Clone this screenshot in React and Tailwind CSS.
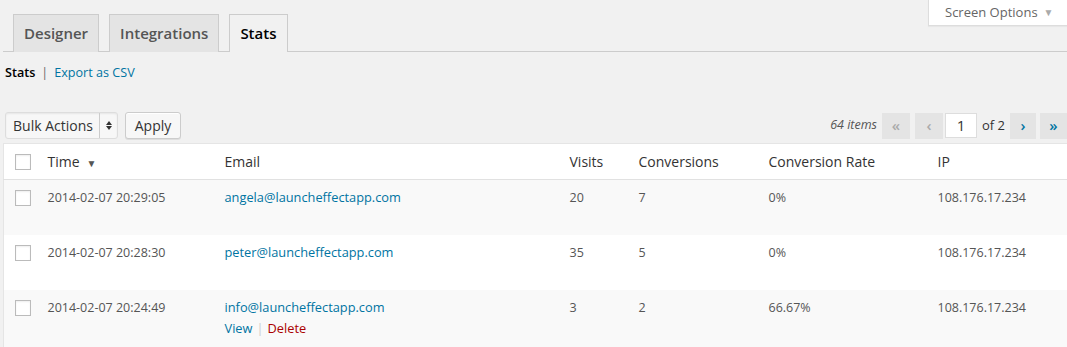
import React from "react";

const rows = [
  { time: "2014-02-07 20:29:05", email: "angela@launcheffectapp.com", visits: "20", conv: "7", rate: "0%", ip: "108.176.17.234", bg: "bg-[#f9f9f9]" },
  { time: "2014-02-07 20:28:30", email: "peter@launcheffectapp.com", visits: "35", conv: "5", rate: "0%", ip: "108.176.17.234", bg: "bg-white" },
  { time: "2014-02-07 20:24:49", email: "info@launcheffectapp.com", visits: "3", conv: "2", rate: "66.67%", ip: "108.176.17.234", bg: "bg-[#f9f9f9]", actions: true },
];

function Box() {
  return <div className="w-4 h-4 border border-[#bbb] bg-white shadow-[inset_0_1px_2px_rgba(0,0,0,0.07)]" />;
}

export default function App() {
  return (
    <div className="w-[1067px] h-[347px] overflow-hidden bg-[#f1f1f1] relative text-[13px] text-[#444]" style={{ fontFamily: '"Open Sans", sans-serif' }}>
      {/* Screen options */}
      <div className="absolute right-0 top-0 w-[139px] h-[26px] bg-white border-l border-b border-[#ddd] flex items-center pl-[16px] text-[#666] text-[13px] shadow-[0_1px_1px_rgba(0,0,0,0.04)]">
        <span>Screen Options</span>
        <span className="ml-[6px] text-[#aaa] text-[10px]">▼</span>
      </div>

      <div className="pl-[3px]">
        {/* Tabs */}
        <div className="pt-[14px] pl-[10px] flex gap-[10px] border-b border-[#ccc] h-[52px]">
          <div className="h-[38px] px-[10px] flex items-center bg-[#e4e4e4] border border-[#ccc] border-b-0 text-[15px] font-semibold text-[#555]">Designer</div>
          <div className="h-[38px] px-[10px] flex items-center bg-[#e4e4e4] border border-[#ccc] border-b-0 text-[15px] font-semibold text-[#555]">Integrations</div>
          <div className="h-[38px] px-[10px] flex items-center bg-[#f1f1f1] border border-[#ccc] border-b-0 text-[15px] font-semibold text-black -mb-px">Stats</div>
        </div>

        {/* Subnav */}
        <div className="mt-[12px] h-[18px] flex items-center pl-[2px] text-[12.6px]">
          <span className="font-semibold text-black">Stats</span>
          <span className="mx-[6px] text-[#666]">|</span>
          <span className="text-[#0074a2]">Export as CSV</span>
        </div>

        {/* Actions */}
        <div className="mt-[30px] flex items-center h-[27px]">
          <div className="ml-[2px] w-[113px] h-[27px] bg-[#f7f7f7] border border-[#ddd] rounded-[3px] shadow-[inset_0_1px_2px_rgba(0,0,0,0.07)] flex items-center">
            <span className="pl-[7px] text-[14px] text-[#333] flex-1">Bulk Actions</span>
            <div className="w-[18px] h-full border-l border-[#ccc] flex flex-col items-center justify-center gap-[1px]">
              <svg width="6" height="4" viewBox="0 0 6 4"><path d="M0 4 L3 0 L6 4 Z" fill="#333" /></svg>
              <svg width="6" height="4" viewBox="0 0 6 4"><path d="M0 0 L3 4 L6 0 Z" fill="#333" /></svg>
            </div>
          </div>
          <div className="ml-[7px] w-[56px] h-[27px] bg-[#f7f7f7] border border-[#ccc] rounded-[3px] flex items-center justify-center text-[14px] text-[#333] shadow-[0_1px_0_#fff_inset,0_1px_0_rgba(0,0,0,0.08)]">Apply</div>

          <div className="ml-auto flex items-center h-[27px]">
            <span className="italic text-[#555] text-[12.5px] mr-[5px]">64 items</span>
            <div className="w-[28px] h-[26px] bg-[#e4e4e4] flex items-center justify-center text-[#aaa] text-[15px] font-semibold">«</div>
            <div className="ml-[5px] w-[28px] h-[26px] bg-[#e4e4e4] flex items-center justify-center text-[#aaa] text-[15px] font-semibold">‹</div>
            <div className="ml-[2px] w-[32px] h-[25px] bg-white border border-[#ddd] flex items-center justify-center text-[15px] text-[#333]">1</div>
            <span className="ml-[5px] text-[13px] text-[#333]">of 2</span>
            <div className="ml-[5px] w-[26px] h-[26px] bg-[#e4e4e4] flex items-center justify-center text-[#0074a2] text-[15px] font-semibold">›</div>
            <div className="ml-[4px] w-[27px] h-[26px] bg-[#e4e4e4] flex items-center justify-center text-[#0074a2] text-[15px] font-semibold">»</div>
          </div>
        </div>

        {/* Table */}
        <table className="mt-[4px] w-[1100px] table-fixed border-collapse border-l border-t border-[#e5e5e5] bg-white">
          <colgroup>
            <col className="w-[34px]" />
            <col className="w-[177px]" />
            <col className="w-[345px]" />
            <col className="w-[69px]" />
            <col className="w-[130px]" />
            <col className="w-[169px]" />
            <col />
          </colgroup>
          <thead>
            <tr className="h-[36px] border-b border-[#e1e1e1] text-[14px] text-[#333]">
              <th className="p-0 pl-[11px] text-left font-normal"><Box /></th>
              <th className="p-0 pl-[10px] text-left font-normal">
                <span>Time</span>
                <span className="ml-[7px] text-[10px] text-[#555] align-middle">▼</span>
              </th>
              <th className="p-0 pl-[10px] text-left font-normal">Email</th>
              <th className="p-0 pl-[10px] text-left font-normal">Visits</th>
              <th className="p-0 pl-[10px] text-left font-normal">Conversions</th>
              <th className="p-0 pl-[10px] text-left font-normal">Conversion Rate</th>
              <th className="p-0 pl-[10px] text-left font-normal">IP</th>
            </tr>
          </thead>
          <tbody>
            {rows.map((r, i) => (
              <tr key={i} className={`${r.bg} align-top text-[#555] text-[12.5px]`}>
                <td className={`p-0 pl-[11px] pt-[10px] ${i === 2 ? "h-[57px]" : "h-[55px]"}`}><Box /></td>
                <td className="p-0 pl-[10px] pt-[8px] leading-[19px]">{r.time}</td>
                <td className="p-0 pl-[10px] pt-[8px] leading-[19px]">
                  <div className="text-[#0074a2] text-[12.8px]">{r.email}</div>
                  {r.actions && (
                    <div className="mt-[2px] text-[12.8px]">
                      <span className="text-[#0074a2]">View</span>
                      <span className="mx-[4px] text-[#ccc]">|</span>
                      <span className="text-[#a00]">Delete</span>
                    </div>
                  )}
                </td>
                <td className="p-0 pl-[10px] pt-[8px] leading-[19px]">{r.visits}</td>
                <td className="p-0 pl-[10px] pt-[8px] leading-[19px]">{r.conv}</td>
                <td className="p-0 pl-[10px] pt-[8px] leading-[19px]">{r.rate}</td>
                <td className="p-0 pl-[10px] pt-[8px] leading-[19px]">{r.ip}</td>
              </tr>
            ))}
          </tbody>
        </table>
      </div>
    </div>
  );
}
